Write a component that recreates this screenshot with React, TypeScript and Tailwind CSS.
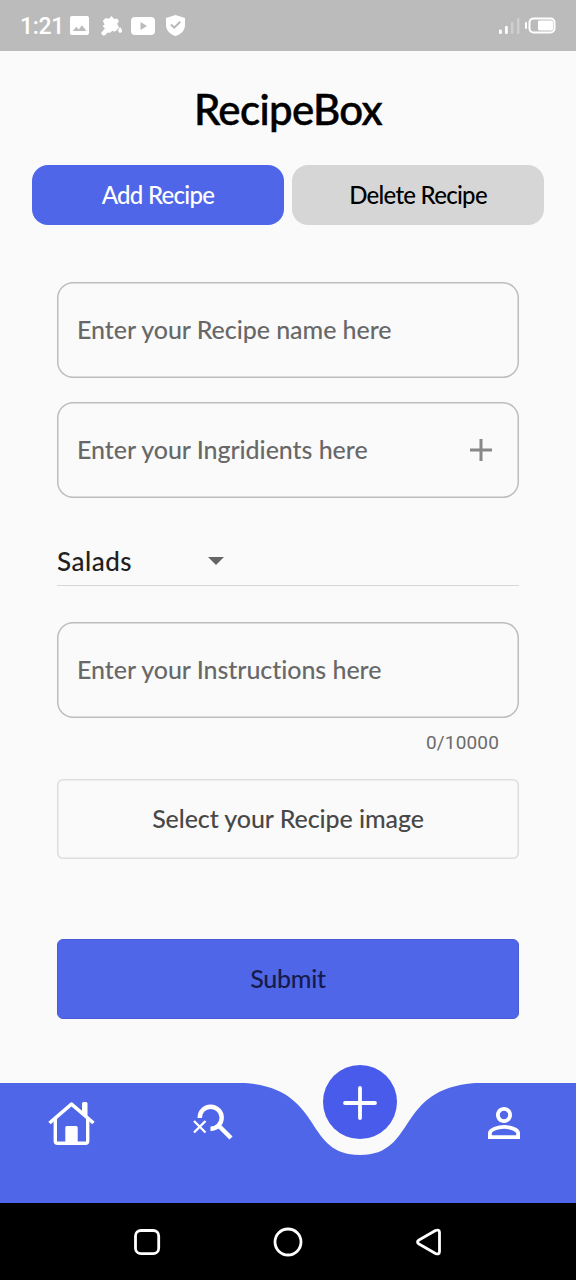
import type { ReactNode } from "react";
import { MdPersonOutline } from "react-icons/md";

function StatusBar() {
  return (
    <header className="flex h-[51px] shrink-0 items-center bg-[#bbbbbb] pl-5 pr-[19px] text-white">
      <span className="w-[42px] whitespace-nowrap pt-[3px] font-['Roboto',sans-serif] text-[23px] font-medium leading-[48px] tracking-[-0.3px]">1:21</span>
      <svg className="ml-2 h-[19px] w-[19px]" viewBox="0 0 19 19">
        <path fill="currentColor" fillRule="evenodd" d="M2 0h15a2 2 0 0 1 2 2v15a2 2 0 0 1-2 2H2a2 2 0 0 1-2-2V2a2 2 0 0 1 2-2Zm.8 15h13.5l-4.3-5.8-3.3 4.3-2.4-2.8Z" />
      </svg>
      <svg className="ml-[11px] h-[22px] w-[23px]" viewBox="0 0 23 22">
        <path fill="currentColor" stroke="currentColor" strokeWidth=".8" strokeLinejoin="round" d="M8 4c2 0 2.500-1 3.200-2.500L14.500 4.500c2-1 3.500-.3 3.700 1.300.1 1.500-.5 2.300-1.500 2.900l2 4-3.700 3.500-3-.8c-1 2-2.800 2.300-4.300 1.600l-2.700 2.800c-1.500 1.300-4.300-.8-3-2.500l3.500-4C3 12.300 2.500 10.600 5 9.600L3.200 5.800 5.500 3.500Z" />
        <path fill="currentColor" d="M20 12c2 2.800 2.800 3.800 1.500 5.200-1.300 1.200-3.300.2-3.300-1.500 0-1 .9-2.300 1.800-3.700Z" />
      </svg>
      <svg className="ml-2 h-[18px] w-6" viewBox="0 0 24 18">
        <path fill="currentColor" fillRule="evenodd" d="M4 0h16q4 0 4 4v10q0 4-4 4H4q-4 0-4-4V4q0-4 4-4Zm5.500 5v8l6.500-4Z" />
      </svg>
      <svg className="ml-[11px] h-[21px] w-[19px]" viewBox="0 0 19 21">
        <path fill="currentColor" d="M9.500 0 19 3v7c0 5-3.500 9-9.500 11C3.500 19 0 15 0 10V3Z" />
        <path fill="none" stroke="#b8b8b8" strokeWidth="2" d="m5 9.500 3.200 3.200 6-6" />
      </svg>
      <svg className="ml-auto h-[18px] w-[58px]" viewBox="0 0 58 18">
        <rect x="0" y="12.500" width="2.800" height="4.500" rx="1" fill="white" />
        <rect x="6" y="9" width="2.800" height="8" rx="1" fill="white" />
        <rect x="12" y="5" width="2.400" height="12" rx="1" fill="white" opacity=".3" />
        <rect x="18" y="1" width="2.400" height="16" rx="1" fill="white" opacity=".3" />
        <rect x="26" y="5" width="2" height="7" rx="1" fill="white" />
        <rect x="30.500" y="1.500" width="25" height="14" rx="4" fill="none" stroke="white" strokeWidth="2" />
        <rect x="39" y="3.500" width="15" height="10" rx="1.500" fill="white" />
      </svg>
    </header>
  );
}

function Field({ text, children }: { text: string; children?: ReactNode }) {
  return (
    <div className="flex h-24 items-center justify-between rounded-2xl pl-5 pr-[26px] ring-[1.5px] ring-[#bdbdbd] ring-inset">
      <span className="whitespace-nowrap pb-0.5 text-[25px] font-medium leading-none tracking-[-0.05px] text-[#686868]">{text}</span>
      {children}
    </div>
  );
}

function BottomNav() {
  return (
    <nav className="relative h-[120px] shrink-0">
      <svg className="absolute inset-0 h-[120px] w-[576px]" viewBox="0 0 576 120">
        <path fill="#5066e9" d="M0 0H244.800C325.400 6 302.400 72 360 72S394.600 6 475.200 0H576V120H0Z" />
      </svg>
      <div className="relative grid grid-cols-4 text-white">
        <div className="flex h-20 items-center justify-center">
          <svg className="h-12 w-12" viewBox="0 0 48 48" fill="none" stroke="currentColor">
            <path strokeWidth="3.600" d="M1.500 24 23.500 5.200l22 18.800" strokeLinejoin="round" />
            <path strokeWidth="3.400" d="M7.300 20v22q0 2.300 2.300 2.300h27.800q2.300 0 2.300-2.300V20" />
            <path fill="currentColor" stroke="none" d="M17.300 28.500q0-1.500 1.500-1.500h9.400q1.500 0 1.500 1.500V45H17.300ZM34 14V4.500q0-1.500 1.500-1.500H38q1.500 0 1.500 1.500V19Z" />
          </svg>
        </div>
        <div className="flex h-20 items-center justify-center">
          <svg className="h-12 w-12" viewBox="0 0 48 48" fill="none" stroke="currentColor">
            <path strokeWidth="4.400" d="M7.700 19A11 11 0 1 1 18.500 29.700M26.500 26.500 39 39" />
            <path strokeWidth="2.300" d="m2 22 11.500 11.500M13.500 22 2 33.500" />
          </svg>
        </div>
        <div className="flex justify-center">
          <button className="-mt-[18px] flex h-[74px] w-[74px] items-center justify-center rounded-full bg-[#495beb]" aria-label="Add">
            <svg className="mt-0.5 h-[34px] w-[34px]" viewBox="0 0 34 34" fill="none" stroke="white" strokeWidth="3.800" strokeLinecap="round">
              <path d="M17 2v30M2 17h30" />
            </svg>
          </button>
        </div>
        <div className="flex h-20 items-center justify-center">
          <MdPersonOutline className="h-12 w-12" />
        </div>
      </div>
    </nav>
  );
}

function SystemNav() {
  return (
    <footer className="flex h-[77px] shrink-0 items-center justify-center bg-black">
      <svg className="h-8 w-[320px]" viewBox="0 0 320 32" fill="none" stroke="white" strokeWidth="2.800">
        <rect x="7.500" y="4.500" width="23.200" height="23.200" rx="5.500" />
        <circle cx="160" cy="16" r="13" />
        <path strokeLinejoin="round" d="M291 14 307.500 4.500q4-1.500 4 2v19q0 3.500-4 2L291 18q-3-2 0-4Z" />
      </svg>
    </footer>
  );
}

export default function App() {
  return (
    <div className="flex h-[1280px] w-[576px] flex-col overflow-hidden bg-[#fafafa] font-['Lato',sans-serif] [font-variant-ligatures:none]">
      <StatusBar />
      <main className="flex flex-1 flex-col">
        <h1 className="h-[114px] pt-[33px] text-center text-[42px] font-medium leading-[50px] tracking-[-0.65px] text-black [-webkit-text-stroke:0.5px_black]">RecipeBox</h1>
        <div className="flex gap-2 px-8 text-2xl font-medium tracking-[-0.72px]">
          <button className="h-[60px] flex-1 rounded-2xl bg-[#5066e9] text-white">Add Recipe</button>
          <button className="h-[60px] flex-1 rounded-2xl bg-[#d6d6d6] text-black">Delete Recipe</button>
        </div>
        <div className="flex flex-col pl-[57px] pr-[57px] pt-[57px]">
          <Field text="Enter your Recipe name here" />
          <div className="h-6" />
          <Field text="Enter your Ingridients here">
            <svg className="h-6 w-6" viewBox="0 0 24 24" stroke="#888888" strokeWidth="3">
              <path d="M12 1v22M1 12h22" />
            </svg>
          </Field>
          <div className="mt-[38px] flex h-[50px] items-center border-b border-[#d6d6d6]">
            <span className="w-[151px] text-[26px] font-medium leading-none tracking-[0.5px] text-[#202020]">Salads</span>
            <svg className="h-2 w-4" viewBox="0 0 16 8"><path fill="#666" d="M0 0h16L8 8Z" /></svg>
          </div>
          <div className="h-9" />
          <Field text="Enter your Instructions here" />
          <p className="h-[61px] pr-5 pt-3 text-right font-['Roboto',sans-serif] text-[19px] leading-[26px] tracking-[0.15px] text-[#6b6b6b]">0/10000</p>
          <button className="h-20 rounded-md text-[25px] font-medium tracking-[-0.08px] text-[#484848] ring-[1.5px] ring-[#dddddd] ring-inset">Select your Recipe image</button>
          <button className="mt-20 h-20 rounded-md border border-[#485bd6] bg-[#5066e9] text-[25px] font-medium tracking-[-0.3px] text-[#151b4a]">Submit</button>
        </div>
      </main>
      <BottomNav />
      <SystemNav />
    </div>
  );
}
